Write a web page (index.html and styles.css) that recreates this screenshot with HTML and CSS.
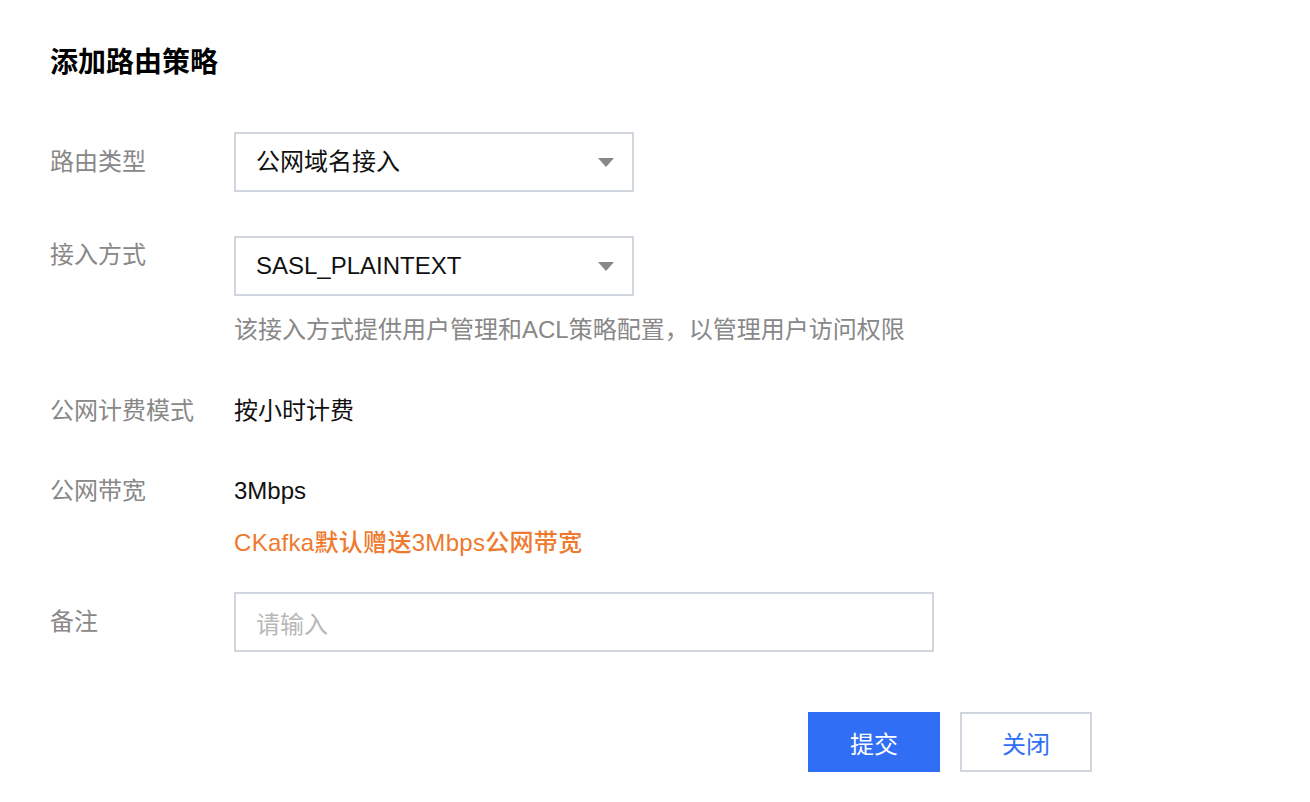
FILE: index.html
```html
<!DOCTYPE html>
<html lang="zh-CN">
<head>
<meta charset="utf-8">
<title>添加路由策略</title>
<link rel="stylesheet" href="styles.css">
</head>
<body>
<div class="page">
  <h1 class="title">添加路由策略</h1>
  <div class="form">
    <div class="row row-1">
      <div class="label label-mid">路由类型</div>
      <div class="field">
        <div class="select">
          <span class="select-text">公网域名接入</span>
          <span class="caret"></span>
        </div>
      </div>
    </div>
    <div class="row row-2">
      <div class="label label-top">接入方式</div>
      <div class="field">
        <div class="select">
          <span class="select-text">SASL_PLAINTEXT</span>
          <span class="caret"></span>
        </div>
        <div class="help">该接入方式提供用户管理和ACL策略配置，以管理用户访问权限</div>
      </div>
    </div>
    <div class="row row-3">
      <div class="label">公网计费模式</div>
      <div class="field"><div class="value">按小时计费</div></div>
    </div>
    <div class="row row-4">
      <div class="label">公网带宽</div>
      <div class="field">
        <div class="value">3Mbps</div>
        <div class="notice">CKafka默认赠送3Mbps公网带宽</div>
      </div>
    </div>
    <div class="row row-5">
      <div class="label label-mid">备注</div>
      <div class="field">
        <div class="input"><span class="placeholder">请输入</span></div>
      </div>
    </div>
    <div class="footer">
      <button class="btn btn-primary" type="button">提交</button>
      <button class="btn btn-default" type="button">关闭</button>
    </div>
  </div>
</div>
</body>
</html>
```

FILE: styles.css
```css
* { box-sizing: border-box; }

html, body {
  margin: 0;
  padding: 0;
  background: #ffffff;
}

body {
  font-family: "Liberation Sans", "Noto Sans CJK SC", sans-serif;
  font-size: 24px;
  color: #111111;
}

.page {
  padding: 39px 0 0 50px;
  width: 1092px;
}

.title {
  margin: 0;
  font-size: 28px;
  line-height: 48px;
  font-weight: 700;
  color: #000000;
}

.form {
  display: flex;
  flex-direction: column;
}

.row {
  display: grid;
  grid-template-columns: 184px 1fr;
  align-items: start;
}

.row-1 { margin-top: 45px; }
.row-2 { margin-top: 44px; }
.row-3 { margin-top: 43px; }
.row-4 { margin-top: 40px; }
.row-5 { margin-top: 29px; }

.label {
  color: #888888;
  line-height: 40px;
  white-space: nowrap;
}

.label-mid { line-height: 60px; }
.label-top { line-height: 38px; }

.field {
  display: flex;
  flex-direction: column;
}

.select {
  width: 400px;
  height: 60px;
  border: 2px solid #d1d5de;
  display: flex;
  align-items: center;
  justify-content: space-between;
  padding: 0 18px 0 20px;
  background: #ffffff;
}

.select-text {
  color: #111111;
  line-height: 56px;
}

.caret {
  width: 0;
  height: 0;
  border-left: 8px solid transparent;
  border-right: 8px solid transparent;
  border-top: 9px solid #888888;
}

.help {
  margin-top: 16px;
  line-height: 36px;
  color: #888888;
}

.value {
  line-height: 40px;
  color: #111111;
}

.notice {
  margin-top: 12px;
  line-height: 40px;
  color: #ee7a2e;
  font-weight: 500;
  letter-spacing: 0.3px;
}

.input {
  width: 700px;
  height: 60px;
  border: 2px solid #d1d5de;
  display: flex;
  align-items: center;
  padding: 0 20px;
}

.placeholder {
  color: #b8b8b8;
}

.footer {
  margin-top: 60px;
  display: flex;
  justify-content: flex-end;
  gap: 20px;
}

.btn {
  width: 132px;
  height: 60px;
  font-family: "Liberation Sans", "Noto Sans CJK SC", sans-serif;
  font-size: 24px;
  border: 2px solid transparent;
  padding: 0;
  cursor: pointer;
}

.btn-primary {
  background: #306ef5;
  border-color: #306ef5;
  color: #ffffff;
}

.btn-default {
  background: #ffffff;
  border-color: #d1d5de;
  color: #306ef5;
}
```
